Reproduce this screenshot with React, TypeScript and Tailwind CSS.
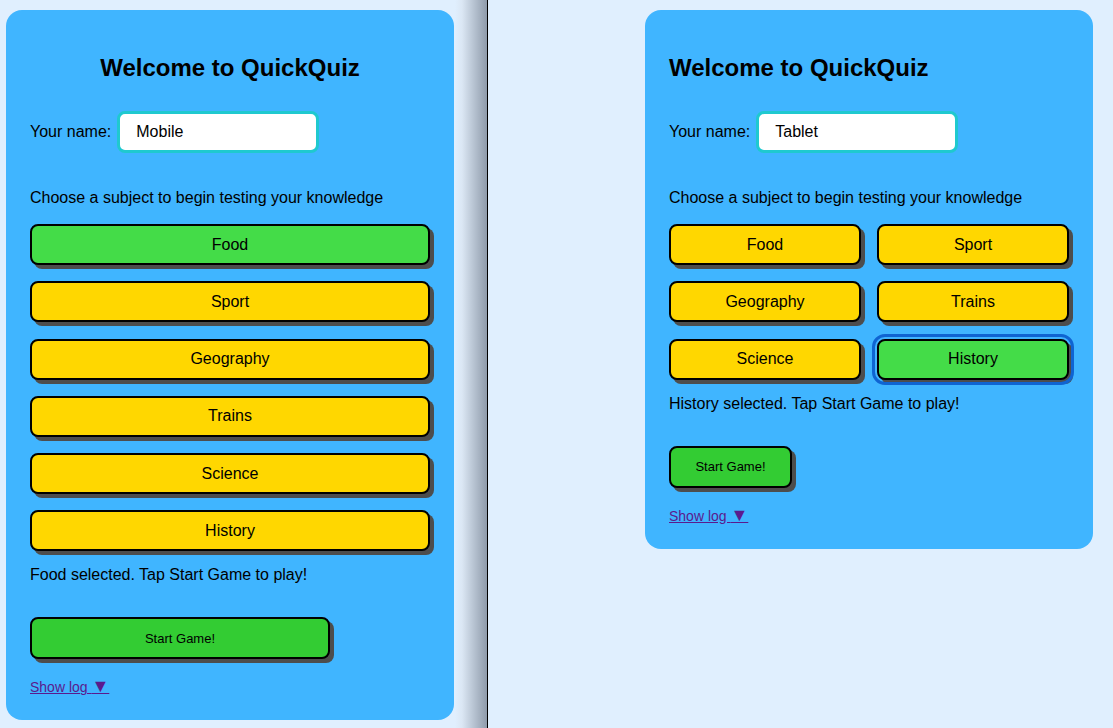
import React from 'react';

const SUBJECTS = ['Food', 'Sport', 'Geography', 'Trains', 'Science', 'History'];

const font = { fontFamily: '"Liberation Sans", Arial, Helvetica, sans-serif' };

type QuizProps = {
  name: string;
  selected: string;
  layout: 'mobile' | 'tablet';
};

const SubjectButton: React.FC<{ label: string; active: boolean; focused?: boolean }> = ({ label, active, focused }) => (
  <button
    className={`h-[41px] w-full rounded-lg border-2 border-black text-[16px] text-black shadow-[4px_4px_0_#4d4d4d] ${
      active ? 'bg-[#44dc48]' : 'bg-[#ffd700]'
    } ${focused ? 'outline-[3px] outline-solid outline-[#0f64d2] outline-offset-2' : ''}`}
  >
    {label}
  </button>
);

const QuizCard: React.FC<QuizProps> = ({ name, selected, layout }) => {
  const isMobile = layout === 'mobile';
  return (
    <div className="w-[448px] rounded-2xl bg-[#40b5ff] px-6 pt-[44px] pb-[25px] text-black">
      <h1 className={`text-[24px] leading-[28px] font-bold ${isMobile ? 'text-center' : 'text-left'}`}>
        Welcome to QuickQuiz
      </h1>

      <div className="mt-[29px] flex items-center gap-[6px]">
        <label className="text-[16px]">Your name:</label>
        <input
          readOnly
          value={name}
          className="h-[42px] w-[202px] rounded-lg border-[3px] border-[#1fc9cf] bg-white pl-4 text-[16px] text-black outline-none"
        />
      </div>

      <p className="mt-[36px] text-[16px] leading-[18px]">Choose a subject to begin testing your knowledge</p>

      <div className={`mt-[17px] grid gap-x-4 gap-y-[16.3px] ${isMobile ? 'grid-cols-1' : 'grid-cols-2'}`}>
        {SUBJECTS.map((s) => (
          <SubjectButton key={s} label={s} active={s === selected} focused={!isMobile && s === selected} />
        ))}
      </div>

      <p className="mt-[15px] text-[16px] leading-[18px]">{selected} selected. Tap Start Game to play!</p>

      <button
        className={`mt-[33px] h-[42px] rounded-lg border-2 border-black bg-[#33cc33] text-[13px] text-black shadow-[4px_4px_0_#4d4d4d] ${
          isMobile ? 'w-[300px]' : 'w-[123px]'
        }`}
      >
        Start Game!
      </button>

      <div className="mt-[18px] h-[18px] text-[14px] leading-[18px]">
        <a href="#" className="text-[#5a1a8e] underline">
          Show log <span className="text-[18px] leading-[18px]">▼</span>
        </a>
      </div>
    </div>
  );
};

const App: React.FC = () => {
  return (
    <div style={font} className="flex h-[728px] w-[1113px] overflow-hidden bg-[#e0effe]">
      {/* mobile pane */}
      <div className="flex h-full w-[488px] shrink-0 items-start border-r border-black bg-[linear-gradient(to_right,#e0effe_455px,#dbe7f4_462px,#8f9bab_487px)] pt-[10px] pl-[6px]">
        <QuizCard name="Mobile" selected="Food" layout="mobile" />
      </div>

      {/* tablet pane */}
      <div className="flex flex-1 items-start justify-end pt-[10px] pr-[20px]">
        <QuizCard name="Tablet" selected="History" layout="tablet" />
      </div>
    </div>
  );
};

export default App;
